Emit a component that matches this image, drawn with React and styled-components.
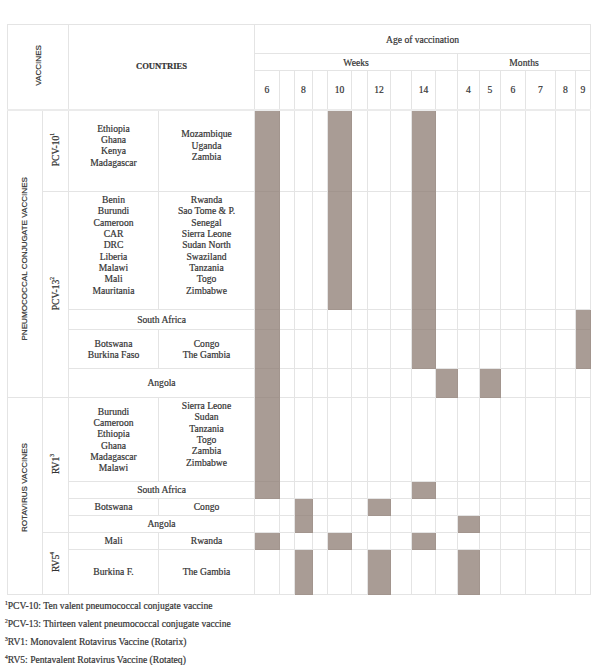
import React from 'react'
import styled, { createGlobalStyle } from 'styled-components'

const GlobalStyle = createGlobalStyle`
	body {
		margin: 0;
		background: #fff;
	}
`

const GRID = [25, 15, 18, 15, 24, 16, 23, 21, 24, 22, 22, 21, 25, 30, 20, 15]
const LEAD = [35, 26, 90, 96]

const Page = styled.div`
	width: 600px;
	height: 665px;
	box-sizing: border-box;
	padding: 24px 0 0 5px;
	font-family: "Liberation Serif", "Times New Roman", serif;
	font-size: 9.6px;
	color: #333;
	-webkit-text-stroke: 0.2px #333;
`

const Table = styled.table`
	margin-left: 2px;
	width: 583px;
	table-layout: fixed;
	border-collapse: collapse;
`

const Row = styled.tr`
	height: ${({ $h }) => $h}px;
`

const Cell = styled.td`
	border: 1px solid #e4e4e4;
	padding: 0;
	text-align: center;
	vertical-align: middle;
	line-height: 11.3px;
	background: ${({ $filled }) => ($filled ? '#a99c95' : 'transparent')};
	${({ $filled }) => $filled && 'border-color: #a2958e;'}
	${({ $pb }) => $pb && `padding-bottom: ${$pb}px;`}
	${({ $pt }) => $pt && `padding-top: ${$pt}px;`}
`

const HeadCell = styled.th`
	border: 1px solid #e4e4e4;
	${({ $thick }) => $thick && 'border-bottom: 2px solid #ebebeb;'}
	padding: 0;
	font-weight: ${({ $bold }) => ($bold ? 'bold' : 'normal')};
	font-size: ${({ $bold }) => ($bold ? '8.6px' : 'inherit')};
	text-align: center;
	vertical-align: middle;
	line-height: 11px;
`

const Vertical = styled.span`
	display: inline-block;
	writing-mode: vertical-rl;
	transform: rotate(180deg);
	white-space: nowrap;
	font-family: ${({ $sans }) => ($sans ? '"Liberation Sans", Arial, sans-serif' : 'inherit')};
	font-size: ${({ $sans }) => ($sans ? '8.1px' : 'inherit')};
`

const Sup = styled.span`
	font-size: 5.5px;
	vertical-align: super;
	line-height: 0;
`

const Notes = styled.div`
	margin-top: 2px;
	line-height: 18px;
`

const Note = styled.div`
	white-space: nowrap;
`

const GridCells = ({ filled = [] }) => (
	<>
		{GRID.map((_, i) => (
			<Cell key={i} $filled={filled.includes(i)} />
		))}
	</>
)

const Names = ({ list, extra }) => (
	<Cell $pb={extra ? 11 : 0}>
		{list.map((n, i) => (
			<React.Fragment key={n}>
				{i > 0 && <br />}
				{n}
			</React.Fragment>
		))}
	</Cell>
)

const HEAD_NUMS = ['6', '', '8', '', '10', '', '12', '', '14', '', '4', '5', '6', '7', '8', '9']

export default function App() {
	return (
		<Page>
			<GlobalStyle />
			<Table>
				<colgroup>
					{[...LEAD, ...GRID].map((w, i) => (
						<col key={i} style={{ width: w }} />
					))}
				</colgroup>
				<thead>
					<Row $h={29}>
						<HeadCell colSpan={2} rowSpan={3} $thick>
							<Vertical $sans>VACCINES</Vertical>
						</HeadCell>
						<HeadCell colSpan={2} rowSpan={3} $bold $thick>COUNTRIES</HeadCell>
						<HeadCell colSpan={16}>Age of vaccination</HeadCell>
					</Row>
					<Row $h={17}>
						<HeadCell colSpan={10}>Weeks</HeadCell>
						<HeadCell colSpan={6}>Months</HeadCell>
					</Row>
					<Row $h={39}>
						{HEAD_NUMS.map((n, i) => (
							<HeadCell key={i} $thick>{n}</HeadCell>
						))}
					</Row>
				</thead>
				<tbody>
					<Row $h={82}>
						<Cell rowSpan={5} $pt={12}>
							<Vertical $sans>PNEUMOCOCCAL CONJUGATE VACCINES</Vertical>
						</Cell>
						<Cell>
							<Vertical>PCV-10<Sup>1</Sup></Vertical>
						</Cell>
						<Names list={['Ethiopia', 'Ghana', 'Kenya', 'Madagascar']} extra />
						<Names list={['Mozambique', 'Uganda', 'Zambia']} extra />
						<GridCells filled={[0, 4, 8]} />
					</Row>
					<Row $h={118}>
						<Cell rowSpan={4}>
							<Vertical>PCV-13<Sup>2</Sup></Vertical>
						</Cell>
						<Names list={['Benin', 'Burundi', 'Cameroon', 'CAR', 'DRC', 'Liberia', 'Malawi', 'Mali', 'Mauritania']} extra />
						<Names list={['Rwanda', 'Sao Tome & P.', 'Senegal', 'Sierra Leone', 'Sudan North', 'Swaziland', 'Tanzania', 'Togo', 'Zimbabwe']} extra />
						<GridCells filled={[0, 4, 8]} />
					</Row>
					<Row $h={20}>
						<Cell colSpan={2}>South Africa</Cell>
						<GridCells filled={[0, 8, 15]} />
					</Row>
					<Row $h={39}>
						<Names list={['Botswana', 'Burkina Faso']} />
						<Names list={['Congo', 'The Gambia']} />
						<GridCells filled={[0, 8, 15]} />
					</Row>
					<Row $h={29}>
						<Cell colSpan={2}>Angola</Cell>
						<GridCells filled={[0, 9, 11]} />
					</Row>
					<Row $h={84}>
						<Cell rowSpan={6} $pb={14}>
							<Vertical $sans>ROTAVIRUS VACCINES</Vertical>
						</Cell>
						<Cell rowSpan={4}>
							<Vertical>RV1<Sup>3</Sup></Vertical>
						</Cell>
						<Names list={['Burundi', 'Cameroon', 'Ethiopia', 'Ghana', 'Madagascar', 'Malawi']} />
						<Names list={['Sierra Leone', 'Sudan', 'Tanzania', 'Togo', 'Zambia', 'Zimbabwe']} extra />
						<GridCells filled={[0]} />
					</Row>
					<Row $h={17}>
						<Cell colSpan={2}>South Africa</Cell>
						<GridCells filled={[0, 8]} />
					</Row>
					<Row $h={17}>
						<Cell>Botswana</Cell>
						<Cell>Congo</Cell>
						<GridCells filled={[2, 6]} />
					</Row>
					<Row $h={17}>
						<Cell colSpan={2}>Angola</Cell>
						<GridCells filled={[2, 10]} />
					</Row>
					<Row $h={17}>
						<Cell rowSpan={2}>
							<Vertical>RV5<Sup>4</Sup></Vertical>
						</Cell>
						<Cell>Mali</Cell>
						<Cell>Rwanda</Cell>
						<GridCells filled={[0, 4, 8]} />
					</Row>
					<Row $h={45}>
						<Cell>Burkina F.</Cell>
						<Cell>The Gambia</Cell>
						<GridCells filled={[2, 6, 10]} />
					</Row>
				</tbody>
			</Table>
			<Notes>
				<Note><Sup>1</Sup>PCV-10: Ten valent pneumococcal conjugate vaccine</Note>
				<Note><Sup>2</Sup>PCV-13: Thirteen valent pneumococcal conjugate vaccine</Note>
				<Note><Sup>3</Sup>RV1: Monovalent Rotavirus Vaccine (Rotarix)</Note>
				<Note><Sup>4</Sup>RV5: Pentavalent Rotavirus Vaccine (Rotateq)</Note>
			</Notes>
		</Page>
	)
}
